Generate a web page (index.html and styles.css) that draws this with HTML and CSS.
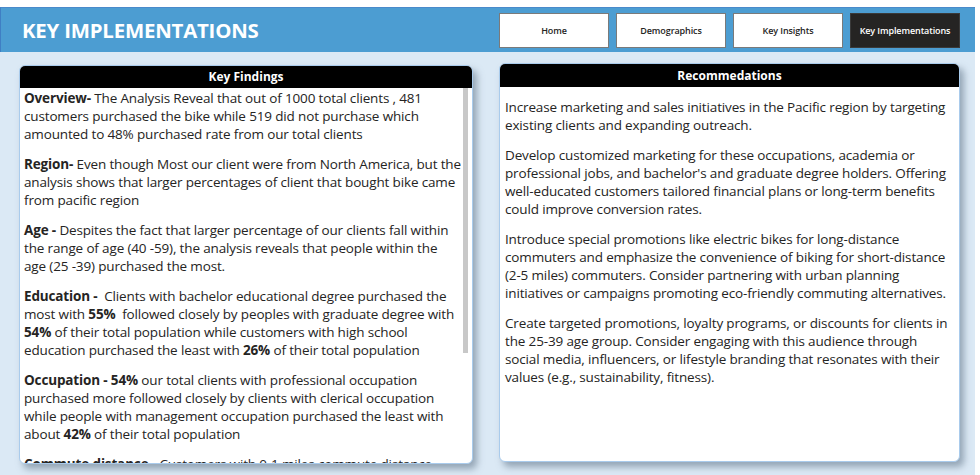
FILE: index.html
```html
<!DOCTYPE html>
<html lang="en">
<head>
<meta charset="utf-8">
<title>Key Implementations</title>
<link rel="stylesheet" href="styles.css">
</head>
<body>
<div class="page">
  <header class="topbar">
    <h1 class="title">KEY IMPLEMENTATIONS</h1>
    <nav class="nav">
      <a class="nav-btn">Home</a>
      <a class="nav-btn">Demographics</a>
      <a class="nav-btn">Key Insights</a>
      <a class="nav-btn active">Key Implementations</a>
    </nav>
  </header>
  <main class="main">
    <section class="card card-left">
      <div class="card-head">Key Findings</div>
      <div class="card-body scroll">
        <p><b>Overview-</b> The Analysis Reveal that out of 1000 total clients , 481 customers purchased the bike while 519 did not purchase which amounted to 48% purchased rate from our total clients</p>
        <p><b>Region-</b> Even though Most our client were from North America, but the analysis shows that larger percentages of client that bought bike came from pacific region</p>
        <p><b>Age -</b> Despites the fact that larger percentage of our clients fall within the range of age (40 -59), the analysis reveals that people within the age (25 -39) purchased the most.</p>
        <p><b>Education -</b>&nbsp; Clients with bachelor educational degree purchased the most with <b>55%</b>&nbsp; followed closely by peoples with graduate degree with <b>54%</b> of their total population while customers with high school education purchased the least with <b>26%</b> of their total population</p>
        <p><b>Occupation - 54%</b> our total clients with professional occupation purchased more followed closely by clients with clerical occupation while people with management occupation purchased the least with about <b>42%</b> of their total population</p>
        <p><b>Commute distance -</b> Customers with 0-1 miles commute distance purchased the most while those with 10+ miles commute distance purchased the least</p>
      </div>
      <div class="scroll-thumb"></div>
    </section>
    <section class="card card-right">
      <div class="card-head">Recommedations</div>
      <div class="card-body">
        <p>Increase marketing and sales initiatives in the Pacific region by targeting existing clients and expanding outreach.</p>
        <p>Develop customized marketing for these occupations, academia or professional jobs, and bachelor's and graduate degree holders. Offering well-educated customers tailored financial plans or long-term benefits could improve conversion rates.</p>
        <p>Introduce special promotions like electric bikes for long-distance commuters and emphasize the convenience of biking for short-distance (2-5 miles) commuters. Consider partnering with urban planning initiatives or campaigns promoting eco-friendly commuting alternatives.</p>
        <p>Create targeted promotions, loyalty programs, or discounts for clients in the 25-39 age group. Consider engaging with this audience through social media, influencers, or lifestyle branding that resonates with their values (e.g., sustainability, fitness).</p>
      </div>
    </section>
  </main>
</div>
</body>
</html>
```
FILE: styles.css
```css
* { box-sizing: border-box; }
html, body { margin: 0; padding: 0; background: #ffffff; }
body { font-family: "Open Sans", "Noto Sans", sans-serif; color: #252423; }

.page {
  width: 975px;
  height: 475px;
  padding-top: 7px;
  display: flex;
  flex-direction: column;
}

.topbar {
  height: 45px;
  background: #4c9dd2;
  border-left: 1px solid #3f7fc4;
  border-top: 1px solid #4a8acb;
  display: flex;
  align-items: center;
  justify-content: space-between;
  padding: 0 15px 0 21px;
}

.title {
  margin: 0;
  color: #ffffff;
  font-family: "Open Sans", sans-serif;
  font-weight: 700;
  font-size: 20.4px;
  letter-spacing: -0.2px;
}

.nav { display: flex; gap: 7px; }

.nav-btn {
  width: 110px;
  height: 35px;
  display: flex;
  align-items: center;
  justify-content: center;
  background: #ffffff;
  border: 1px solid #7a7a7a;
  color: #252423;
  font-family: "Open Sans", sans-serif;
  font-weight: 600;
  font-size: 9px;
  letter-spacing: -0.1px;
}

.nav-btn.active {
  background: #252423;
  color: #ffffff;
  border-color: #3a3a3a;
}

.main {
  flex: 1;
  background: #dbe9f5;
  display: flex;
  align-items: flex-start;
  padding-left: 19px;
  gap: 26px;
}

.card {
  position: relative;
  background: #ffffff;
  border: 1px solid #a9cbec;
  border-radius: 6px;
  box-shadow: 4px 5px 7px rgba(90, 110, 130, 0.55);
  height: 399px;
  display: flex;
  flex-direction: column;
  overflow: hidden;
}

.card-left { width: 454px; margin-top: 13px; }
.card-right { width: 461px; margin-top: 11px; }

.card-head {
  background: #000000;
  color: #ffffff;
  text-align: center;
  font-weight: 700;
  font-size: 12px;
  height: 22px;
  line-height: 22px;
  flex: none;
}

.card-right .card-head { height: 23px; line-height: 23px; }

.card-body {
  font-size: 13.5px;
  line-height: 18px;
  letter-spacing: -0.15px;
}

.card-body p { margin: 0 0 12px 0; }
.card-body b { font-weight: 700; }

.card-left .card-body {
  flex: 1;
  padding: 1px 0 0 4px;
  margin-right: 11px;
  overflow: hidden;
}

.card-right .card-body { padding: 11px 8px 0 5px; }

.scroll-thumb {
  position: absolute;
  top: 22px;
  right: 4px;
  width: 5px;
  height: 265px;
  background: #c8c8c8;
}
```
